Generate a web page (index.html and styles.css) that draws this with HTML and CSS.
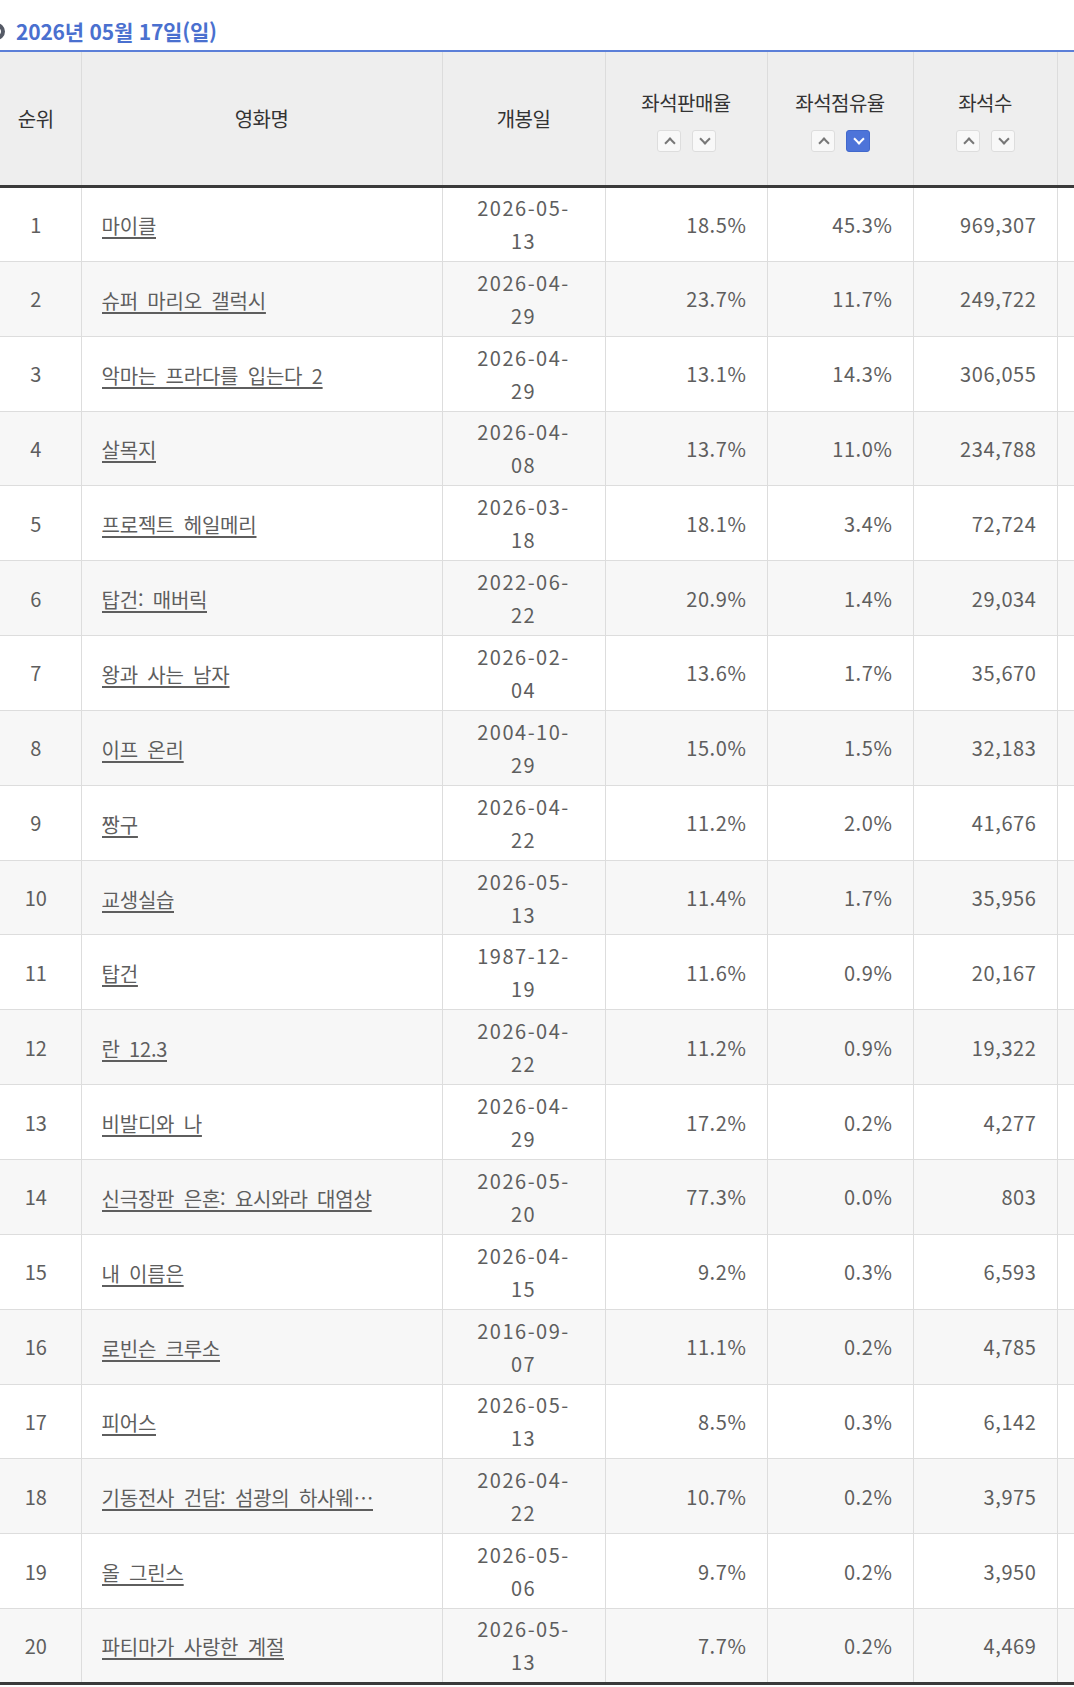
FILE: index.html
```html
<!DOCTYPE html>
<html lang="ko">
<head>
<meta charset="utf-8">
<title>좌석판매율</title>
<link rel="stylesheet" href="styles.css">
</head>
<body>
<div class="page">
  <h2 class="date-title"><span class="ring"></span>2026년 05월 17일(일)</h2>
  <div class="table-wrap">
    <table class="rank-table">
      <colgroup>
        <col class="c-rank"><col class="c-name"><col class="c-date"><col class="c-sale"><col class="c-share"><col class="c-seat"><col class="c-more">
      </colgroup>
      <thead>
        <tr>
          <th>순위</th>
          <th>영화명</th>
          <th>개봉일</th>
          <th><div class="label">좌석판매율</div><div class="sort"><span class="sbtn up"></span><span class="sbtn down"></span></div></th>
          <th><div class="label">좌석점유율</div><div class="sort"><span class="sbtn up"></span><span class="sbtn down active"></span></div></th>
          <th><div class="label">좌석수</div><div class="sort"><span class="sbtn up"></span><span class="sbtn down"></span></div></th>
          <th></th>
        </tr>
      </thead>
      <tbody>
        <tr><td class="rank">1</td><td class="name"><a href="#">마이클</a></td><td class="date">2026-05-<wbr>13</td><td class="num">18.5%</td><td class="num">45.3%</td><td class="num">969,307</td><td></td></tr>
        <tr><td class="rank">2</td><td class="name"><a href="#">슈퍼 마리오 갤럭시</a></td><td class="date">2026-04-<wbr>29</td><td class="num">23.7%</td><td class="num">11.7%</td><td class="num">249,722</td><td></td></tr>
        <tr><td class="rank">3</td><td class="name"><a href="#">악마는 프라다를 입는다 2</a></td><td class="date">2026-04-<wbr>29</td><td class="num">13.1%</td><td class="num">14.3%</td><td class="num">306,055</td><td></td></tr>
        <tr><td class="rank">4</td><td class="name"><a href="#">살목지</a></td><td class="date">2026-04-<wbr>08</td><td class="num">13.7%</td><td class="num">11.0%</td><td class="num">234,788</td><td></td></tr>
        <tr><td class="rank">5</td><td class="name"><a href="#">프로젝트 헤일메리</a></td><td class="date">2026-03-<wbr>18</td><td class="num">18.1%</td><td class="num">3.4%</td><td class="num">72,724</td><td></td></tr>
        <tr><td class="rank">6</td><td class="name"><a href="#">탑건: 매버릭</a></td><td class="date">2022-06-<wbr>22</td><td class="num">20.9%</td><td class="num">1.4%</td><td class="num">29,034</td><td></td></tr>
        <tr><td class="rank">7</td><td class="name"><a href="#">왕과 사는 남자</a></td><td class="date">2026-02-<wbr>04</td><td class="num">13.6%</td><td class="num">1.7%</td><td class="num">35,670</td><td></td></tr>
        <tr><td class="rank">8</td><td class="name"><a href="#">이프 온리</a></td><td class="date">2004-10-<wbr>29</td><td class="num">15.0%</td><td class="num">1.5%</td><td class="num">32,183</td><td></td></tr>
        <tr><td class="rank">9</td><td class="name"><a href="#">짱구</a></td><td class="date">2026-04-<wbr>22</td><td class="num">11.2%</td><td class="num">2.0%</td><td class="num">41,676</td><td></td></tr>
        <tr><td class="rank">10</td><td class="name"><a href="#">교생실습</a></td><td class="date">2026-05-<wbr>13</td><td class="num">11.4%</td><td class="num">1.7%</td><td class="num">35,956</td><td></td></tr>
        <tr><td class="rank">11</td><td class="name"><a href="#">탑건</a></td><td class="date">1987-12-<wbr>19</td><td class="num">11.6%</td><td class="num">0.9%</td><td class="num">20,167</td><td></td></tr>
        <tr><td class="rank">12</td><td class="name"><a href="#">란 12.3</a></td><td class="date">2026-04-<wbr>22</td><td class="num">11.2%</td><td class="num">0.9%</td><td class="num">19,322</td><td></td></tr>
        <tr><td class="rank">13</td><td class="name"><a href="#">비발디와 나</a></td><td class="date">2026-04-<wbr>29</td><td class="num">17.2%</td><td class="num">0.2%</td><td class="num">4,277</td><td></td></tr>
        <tr><td class="rank">14</td><td class="name"><a href="#">신극장판 은혼: 요시와라 대염상</a></td><td class="date">2026-05-<wbr>20</td><td class="num">77.3%</td><td class="num">0.0%</td><td class="num">803</td><td></td></tr>
        <tr><td class="rank">15</td><td class="name"><a href="#">내 이름은</a></td><td class="date">2026-04-<wbr>15</td><td class="num">9.2%</td><td class="num">0.3%</td><td class="num">6,593</td><td></td></tr>
        <tr><td class="rank">16</td><td class="name"><a href="#">로빈슨 크루소</a></td><td class="date">2016-09-<wbr>07</td><td class="num">11.1%</td><td class="num">0.2%</td><td class="num">4,785</td><td></td></tr>
        <tr><td class="rank">17</td><td class="name"><a href="#">피어스</a></td><td class="date">2026-05-<wbr>13</td><td class="num">8.5%</td><td class="num">0.3%</td><td class="num">6,142</td><td></td></tr>
        <tr><td class="rank">18</td><td class="name"><a href="#">기동전사 건담: 섬광의 하사웨…</a></td><td class="date">2026-04-<wbr>22</td><td class="num">10.7%</td><td class="num">0.2%</td><td class="num">3,975</td><td></td></tr>
        <tr><td class="rank">19</td><td class="name"><a href="#">올 그린스</a></td><td class="date">2026-05-<wbr>06</td><td class="num">9.7%</td><td class="num">0.2%</td><td class="num">3,950</td><td></td></tr>
        <tr><td class="rank">20</td><td class="name"><a href="#">파티마가 사랑한 계절</a></td><td class="date">2026-05-<wbr>13</td><td class="num">7.7%</td><td class="num">0.2%</td><td class="num">4,469</td><td></td></tr>
      </tbody>
    </table>
  </div>
</div>
</body>
</html>
```

FILE: styles.css
```css
html, body {
  margin: 0;
  padding: 0;
  background: #ffffff;
  overflow: hidden;
}

body {
  font-family: "Noto Sans CJK KR", "Noto Sans", sans-serif;
  color: #555555;
}

.page {
  width: 1074px;
  overflow: hidden;
}

.date-title {
  display: flex;
  align-items: center;
  height: 50px;
  margin: 0;
  padding-top: 12px;
  box-sizing: border-box;
  font-size: 21px;
  font-weight: bold;
  color: #4a70cf;
  letter-spacing: -0.2px;
}

.ring {
  display: inline-block;
  width: 17px;
  height: 17px;
  box-sizing: border-box;
  border: 4px solid #555a66;
  border-radius: 50%;
  background: #ffffff;
  margin-left: -12px;
  margin-right: 11px;
}

.table-wrap {
  width: 1074px;
  overflow: hidden;
}

.rank-table {
  width: 1220px;
  margin-left: -9px;
  table-layout: fixed;
  border-collapse: collapse;
  border-top: 2px solid #5b7fd8;
  border-bottom: 3px solid #3a3a3a;
  font-size: 20px;
  line-height: 33px;
}

.c-rank { width: 90px; }
.c-name { width: 361px; }
.c-date { width: 163px; }
.c-sale { width: 162px; }
.c-share { width: 146px; }
.c-seat { width: 144px; }
.c-more { width: 154px; }

.rank-table th {
  height: 133px;
  padding: 0;
  background: #eeeeee;
  border-left: 1px solid #dcdcdc;
  border-right: 1px solid #dcdcdc;
  border-bottom: 3px solid #3a3a3a;
  font-weight: normal;
  color: #333333;
  text-align: center;
  vertical-align: middle;
  letter-spacing: -0.5px;
}

.rank-table th:first-child { border-left: none; }

.label {
  line-height: 33px;
}

.sort {
  display: flex;
  justify-content: center;
  gap: 11px;
  margin-top: 11px;
}

.sbtn {
  position: relative;
  width: 24px;
  height: 22px;
  box-sizing: border-box;
  border: 1px solid #dddddd;
  border-radius: 3px;
  background: #f8f8f8;
}

.sbtn::after {
  content: "";
  position: absolute;
  left: 8px;
  width: 6px;
  height: 6px;
  border-left: 2px solid #777777;
  border-top: 2px solid #777777;
}

.sbtn.up::after {
  top: 8px;
  transform: rotate(45deg);
}

.sbtn.down::after {
  top: 4px;
  transform: rotate(-135deg);
}

.sbtn.active {
  background: #4d74d9;
  border-color: #4168cc;
}

.sbtn.active::after {
  border-color: #ffffff;
}

.rank-table td {
  height: 74.85px;
  padding: 0 20px;
  border: 1px solid #dddddd;
  border-top: none;
  vertical-align: middle;
  color: #5e5e5e;
  box-sizing: border-box;
}

.rank-table td:first-child { border-left: none; }

.rank-table tbody tr:nth-child(even) td {
  background: #f7f7f7;
}

.rank-table tbody tr:last-child td {
  border-bottom: none;
}

.rank-table td.rank {
  text-align: center;
  padding: 0;
}

.name a {
  display: inline-block;
  max-width: 280px;
  vertical-align: middle;
  white-space: nowrap;
  overflow: hidden;
  color: #5e5e5e;
  text-decoration: underline;
  text-underline-offset: 3px;
  letter-spacing: -0.2px;
  word-spacing: 4px;
}

.rank-table td.date {
  text-align: center;
  padding: 0 24px;
  letter-spacing: 1.5px;
}

.num {
  text-align: right;
  letter-spacing: 0.6px;
}
```
